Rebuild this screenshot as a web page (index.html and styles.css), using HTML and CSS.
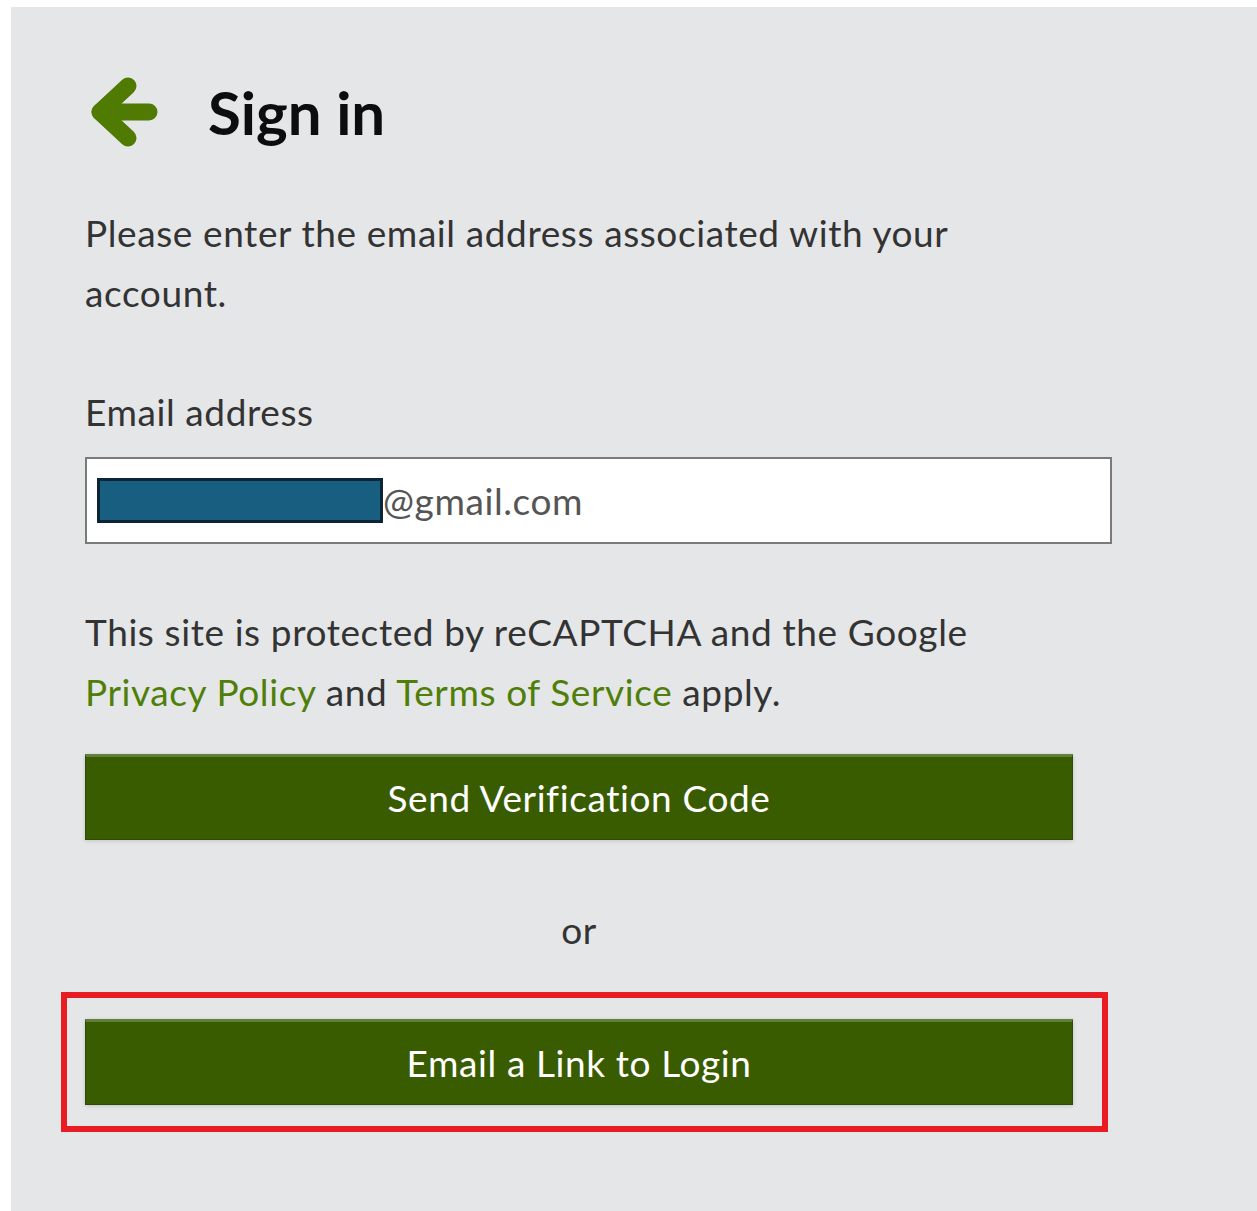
FILE: index.html
```html
<!DOCTYPE html>
<html lang="en">
<head>
<meta charset="utf-8">
<title>Sign in</title>
<link rel="stylesheet" href="styles.css">
</head>
<body>
<main class="panel">
  <header class="title-row">
    <a class="back" href="#" aria-label="Back">
      <svg class="back-icon" viewBox="0 0 72 72" width="72" height="72" aria-hidden="true">
        <polyline points="42,10 14,36 42,62" />
        <line x1="14" y1="36" x2="63" y2="36" />
      </svg>
    </a>
    <h1 class="title">Sign in</h1>
  </header>

  <p class="intro">Please enter the email address associated with your account.</p>

  <label class="field-label" for="email">Email address</label>
  <div class="field" id="email"><span class="redacted"></span>@gmail.com</div>

  <p class="legal">This site is protected by reCAPTCHA and the Google <a href="#">Privacy Policy</a> and <a href="#">Terms of Service</a> apply.</p>

  <button class="btn" type="button">Send Verification Code</button>

  <p class="or">or</p>

  <div class="highlight">
    <button class="btn" type="button">Email a Link to Login</button>
  </div>
</main>
</body>
</html>
```

FILE: styles.css
```css
html, body {
  margin: 0;
  background: #ffffff;
}

body {
  font-family: Lato, "Open Sans", sans-serif;
  color: #333;
}

.panel {
  margin: 7px 0 0 11px;
  min-height: calc(100vh - 7px);
  box-sizing: border-box;
  background: #e5e6e8;
  padding: 69px 0 0 74px;
  width: 1246px;
}

.title-row {
  display: flex;
  align-items: center;
  height: 72px;
}

.back {
  display: block;
  width: 72px;
  height: 72px;
  margin-left: 1px;
}

.back-icon {
  display: block;
  fill: none;
  stroke: #4f7b02;
  stroke-width: 17;
  stroke-linecap: round;
  stroke-linejoin: round;
}

.title {
  margin: 0 0 0 50px;
  font-size: 60px;
  font-weight: 700;
  line-height: 72px;
  color: #0d0d0d;
}

.intro,
.legal,
.field-label,
.field,
.or,
.btn {
  font-size: 37px;
  letter-spacing: 0.6px;
}

.intro {
  width: 1000px;
  margin: 55px 0 0;
  line-height: 60px;
}

.field-label {
  display: block;
  margin-top: 59px;
  line-height: 60px;
}

.field {
  display: flex;
  align-items: center;
  box-sizing: border-box;
  width: 1027px;
  height: 87px;
  margin-top: 15px;
  padding-left: 10px;
  background: #fff;
  border: 2px solid #7a7a7a;
  color: #555;
}

.redacted {
  display: inline-block;
  box-sizing: border-box;
  width: 286px;
  height: 45px;
  background: #175e80;
  border: 3px solid #0c2536;
}

.legal {
  width: 1000px;
  margin: 58px 0 0;
  line-height: 60px;
}

.legal a {
  color: #4f7f08;
  text-decoration: none;
}

.btn {
  display: block;
  box-sizing: border-box;
  width: 988px;
  height: 86px;
  margin: 32px 0 0;
  padding: 0 0 2px;
  background: #3a5c00;
  border: 1px solid #2f4b00;
  border-top: 3px solid #62803b;
  box-shadow: 0 1px 4px rgba(0, 0, 0, 0.15);
  color: #fff;
  font-family: Lato, "Open Sans", sans-serif;
  cursor: pointer;
}

.or {
  width: 988px;
  margin: 60px 0 0;
  text-align: center;
  line-height: 60px;
}

.highlight {
  width: 1047px;
  box-sizing: border-box;
  margin: 32px 0 0 -24px;
  padding: 21px 0 21px 18px;
  border: 6px solid #e81c22;
}

.highlight .btn {
  margin: 0;
}
```
